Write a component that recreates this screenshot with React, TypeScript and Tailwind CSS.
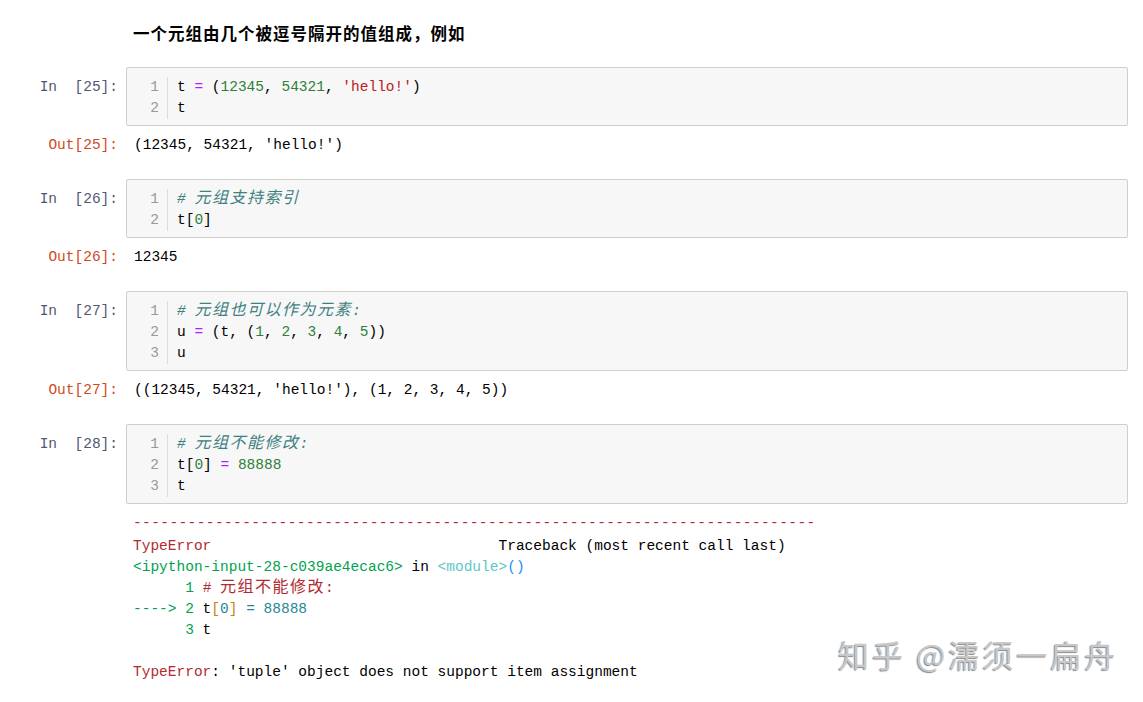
const mono = "font-['Liberation_Mono','Noto_Sans_CJK_SC',monospace]";

const Z = ({ children }: { children: React.ReactNode }) => (
  <span className="text-[16px] tracking-[1.5px]">{children}</span>
);

const Num = ({ children }: { children: React.ReactNode }) => (
  <span className="text-[#2f7f3a]">{children}</span>
);
const Op = ({ children }: { children: React.ReactNode }) => (
  <span className="text-[#aa22ff]">{children}</span>
);
const Cm = ({ children }: { children: React.ReactNode }) => (
  <span className="italic text-[#408080]">{children}</span>
);

type CellProps = {
  n: number;
  lines: React.ReactNode[];
  out?: React.ReactNode;
};

const Cell = ({ n, lines, out }: CellProps) => {
  return (
    <div className="mt-[23px]">
      {/* ===== Input ===== */}
      <div className="flex pr-[15px]">
        <div className="w-[126px] shrink-0 pr-2 pt-[10px] text-right text-[#505872] leading-[21px] whitespace-pre">
          {`In  [${n}]:`}
        </div>
        <div className="flex flex-1 bg-[#f7f7f7] border border-[#cfcfcf] rounded-[2px] pt-[9px] pb-[6px]">
          <div className="w-[41px] shrink-0 border-r border-[#dddddd] pr-[8px] text-right text-[#999999] leading-[21px]">
            {lines.map((_, i) => (
              <div key={i}>{i + 1}</div>
            ))}
          </div>
          <div className="pl-[9px] text-black leading-[21px] whitespace-pre">
            {lines.map((l, i) => (
              <div key={i}>{l}</div>
            ))}
          </div>
        </div>
      </div>

      {/* ===== Output ===== */}
      {out && (
        <div className="flex pt-[9px]">
          <div className="w-[126px] shrink-0 pr-2 text-right text-[#cf4a22] leading-[21px]">
            Out[{n}]:
          </div>
          <div className="pl-[8px] text-black leading-[21px] whitespace-pre">{out}</div>
        </div>
      )}
    </div>
  );
};

const red = "text-[#b22b31]";
const grn = "text-[#00a250]";

export default function App() {
  return (
    <div className={`relative w-[1143px] h-[702px] overflow-hidden bg-white text-[14.5px] ${mono}`}>
      {/* ===== Markdown heading ===== */}
      <div className="pl-[133px] pt-[21px] font-['Noto_Sans_CJK_SC',sans-serif] font-bold text-[16.5px] tracking-[1px] text-black leading-[24px]">
        一个元组由几个被逗号隔开的值组成，例如
      </div>

      <div className="-mt-[1px]">
        <Cell
          n={25}
          lines={[
            <>
              t <Op>=</Op> (<Num>12345</Num>, <Num>54321</Num>,{" "}
              <span className="text-[#ba2121]">'hello!'</span>)
            </>,
            <>t</>,
          ]}
          out={<>(12345, 54321, 'hello!')</>}
        />
        <Cell
          n={26}
          lines={[
            <Cm>
              # <Z>元组支持索引</Z>
            </Cm>,
            <>
              t[<Num>0</Num>]
            </>,
          ]}
          out={<>12345</>}
        />
        <Cell
          n={27}
          lines={[
            <Cm>
              # <Z>元组也可以作为元素</Z>:
            </Cm>,
            <>
              u <Op>=</Op> (t, (<Num>1</Num>, <Num>2</Num>, <Num>3</Num>, <Num>4</Num>, <Num>5</Num>))
            </>,
            <>u</>,
          ]}
          out={<>((12345, 54321, 'hello!'), (1, 2, 3, 4, 5))</>}
        />
        <Cell
          n={28}
          lines={[
            <Cm>
              # <Z>元组不能修改</Z>:
            </Cm>,
            <>
              t[<Num>0</Num>] <Op>=</Op> <Num>88888</Num>
            </>,
            <>t</>,
          ]}
        />

        {/* ===== Traceback ===== */}
        <div className="pl-[133px] pt-[9px] leading-[21px] whitespace-pre text-black">
          <div className={`${red} tracking-[0.4px] h-[23px]`}>{"-".repeat(75)}</div>
          <div>
            <span className={red}>TypeError</span>
            {" ".repeat(33) + "Traceback (most recent call last)"}
          </div>
          <div>
            <span className={grn}>{"<ipython-input-28-c039ae4ecac6>"}</span> in{" "}
            <span className="text-[#60c6c8]">{"<module>"}</span>
            <span className="text-[#208ffb]">()</span>
          </div>
          <div>
            <span className={grn}>{"      1"}</span>{" "}
            <span className={red}>
              # <Z>元组不能修改</Z>:
            </span>
          </div>
          <div>
            <span className={grn}>{"----> 2"}</span> t<span className="text-[#c5860b]">[</span>
            <span className="text-[#1f8a93]">0</span>
            <span className="text-[#c5860b]">]</span> <span className="text-[#1f8a93]">=</span>{" "}
            <span className="text-[#1f8a93]">88888</span>
          </div>
          <div>
            <span className={grn}>{"      3"}</span> t
          </div>
          <div>&nbsp;</div>
          <div>
            <span className={red}>TypeError</span>: 'tuple' object does not support item assignment
          </div>
        </div>
      </div>

      {/* ===== Watermark ===== */}
      <div className="absolute left-[838px] top-[634px] font-['Noto_Sans_CJK_SC',sans-serif] text-[31px] tracking-[3px] leading-[40px] text-[#c8c8c8] whitespace-pre [text-shadow:-1px_1px_1px_#8a8a8a]">
        知乎 @濡须一扁舟
      </div>
    </div>
  );
}
